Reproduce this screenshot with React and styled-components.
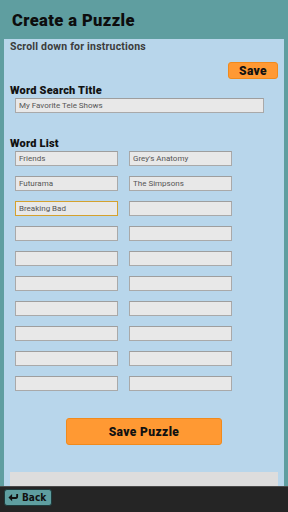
import React from 'react'
import styled, { createGlobalStyle } from 'styled-components'

const GlobalStyle = createGlobalStyle`
    html, body {
        margin: 0;
        padding: 0;
        background: #5F9EA0;
    }
    * {
        box-sizing: border-box;
    }
`

const Screen = styled.div`
    width: 288px;
    height: 512px;
    display: flex;
    flex-direction: column;
    overflow: hidden;
    background: #5F9EA0;
    font-family: Roboto, "Liberation Sans", sans-serif;
`

const Header = styled.header`
    height: 39px;
    flex: 0 0 39px;
    display: flex;
    align-items: center;
    padding: 2px 0 0 12px;

    h1 {
        margin: 0;
        font-size: 16.5px;
        font-weight: 900;
        color: #0d0d0d;
        letter-spacing: 0.4px;
    }
`

const Content = styled.main`
    flex: 1;
    overflow: hidden;
    padding: 0 4px;
`

const Panel = styled.div`
    background: #B8D6EB;
    padding: 0 6px 20px 6px;
    min-height: 100%;
`

const Hint = styled.p`
    margin: 0;
    padding-top: 1px;
    font-size: 10.5px;
    line-height: 13px;
    font-weight: 700;
    color: #3c3c3c;
    letter-spacing: 0.2px;
`

const SaveRow = styled.div`
    display: flex;
    justify-content: flex-end;
    margin-top: 9px;
`

const OrangeButton = styled.button`
    background: #FF9933;
    border: 1px solid #f08a1c;
    border-radius: 3px;
    font-family: Roboto, "Liberation Sans", sans-serif;
    font-weight: 900;
    color: #111;
    padding: 0;
    width: ${p => p.$width}px;
    height: ${p => p.$height}px;
    font-size: ${p => p.$size}px;
    letter-spacing: 0.4px;
    cursor: pointer;
`

const Label = styled.h2`
    margin: ${p => p.$top}px 0 1px 0;
    font-size: 11px;
    line-height: 13px;
    font-weight: 900;
    color: #111;
    letter-spacing: 0.2px;
`

const Field = styled.input`
    display: block;
    height: 15px;
    width: ${p => p.$width}px;
    margin: 0;
    padding: 0 3px;
    background: #E8E8E8;
    border: 1px solid ${p => (p.$focused ? '#D4A12E' : '#A9A9A9')};
    border-top-color: ${p => (p.$focused ? '#D4A12E' : '#9e9e9e')};
    font-family: Roboto, "Liberation Sans", sans-serif;
    font-size: 8px;
    color: #555;
    outline: none;
`

const TitleWrap = styled.div`
    padding-left: 5px;
`

const WordGrid = styled.div`
    display: grid;
    grid-template-columns: 103px 103px;
    column-gap: 11px;
    row-gap: 10px;
    padding-left: 5px;
    margin-top: 1px;
`

const Center = styled.div`
    display: flex;
    justify-content: center;
    margin-top: 27px;
`

const Instructions = styled.div`
    margin-top: 27px;
    height: 60px;
    background: #DDDDDD;
`

const Footer = styled.footer`
    flex: 0 0 26px;
    height: 26px;
    background: #252525;
    border-top: 1px solid #4a4a4a;
    display: flex;
    align-items: flex-start;
    padding: 2px 0 0 4px;
`

const BackButton = styled.button`
    display: flex;
    align-items: center;
    gap: 3px;
    width: 48px;
    height: 17px;
    padding: 0 0 0 3px;
    background: #5F9EA0;
    border: 1px solid #1d3b3c;
    border-radius: 3px;
    font-family: "DejaVu Sans Condensed", "Liberation Sans Narrow", sans-serif;
    font-weight: 700;
    font-size: 10px;
    color: #111;
    cursor: pointer;
`

const ReplyIcon = () => (
    <svg width="11" height="10" viewBox="0 0 24 20">
        <path d="M9 1 L1 9 L9 17 L9 12 L17 12 Q22 12 22 6 L22 1 L18 1 L18 6 Q18 8 16 8 L9 8 Z" fill="#111" />
    </svg>
)

const words = [
    ['Friends', "Grey's Anatomy"],
    ['Futurama', 'The Simpsons'],
    ['Breaking Bad', ''],
    ['', ''], ['', ''], ['', ''], ['', ''], ['', ''], ['', ''], ['', ''],
]

const App = () => {
    return (
        <Screen>
            <GlobalStyle />
            <Header>
                <h1>Create a Puzzle</h1>
            </Header>
            <Content>
                <Panel>
                    <Hint>Scroll down for instructions</Hint>
                    <SaveRow>
                        <OrangeButton $width={50} $height={17} $size={12}>Save</OrangeButton>
                    </SaveRow>
                    <Label $top={5}>Word Search Title</Label>
                    <TitleWrap>
                        <Field $width={249} defaultValue="My Favorite Tele Shows" readOnly />
                    </TitleWrap>
                    <Label $top={24}>Word List</Label>
                    <WordGrid>
                        {words.flat().map((w, i) => (
                            <Field key={i} $width={103} $focused={i === 4} defaultValue={w} readOnly />
                        ))}
                    </WordGrid>
                    <Center>
                        <OrangeButton $width={156} $height={27} $size={12}>Save Puzzle</OrangeButton>
                    </Center>
                    <Instructions />
                </Panel>
            </Content>
            <Footer>
                <BackButton>
                    <ReplyIcon />
                    Back
                </BackButton>
            </Footer>
        </Screen>
    )
}

export default App
